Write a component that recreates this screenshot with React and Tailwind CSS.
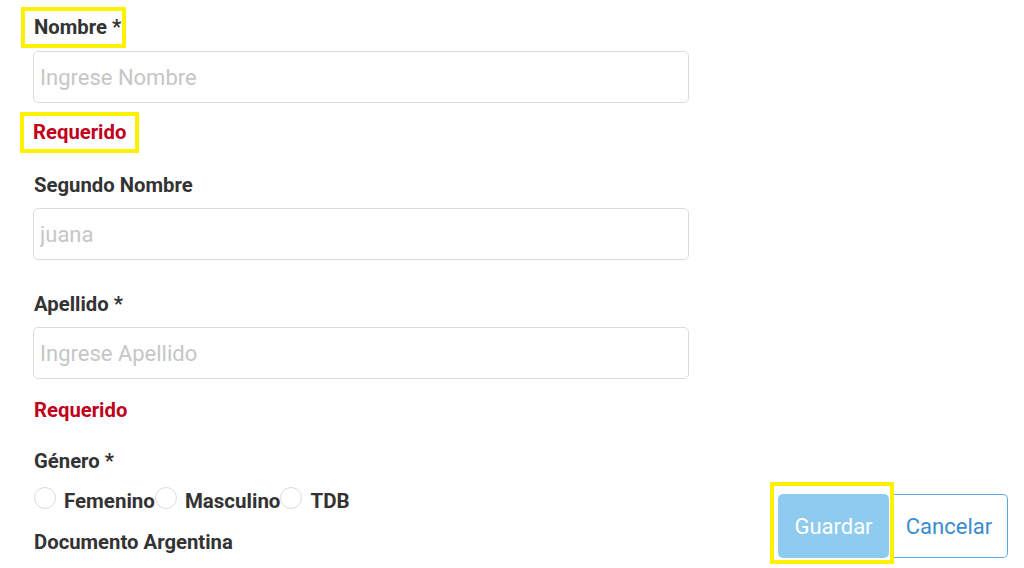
import React from 'react';

const font = { fontFamily: 'Roboto, "Liberation Sans", sans-serif' };

function TextInput({ placeholder, className = '' }) {
    return (
        <input
            type="text"
            placeholder={placeholder}
            className={`block w-[656px] h-[52px] px-[6px] border border-[#d9dde2] rounded-[5px] text-[22px] text-[#333] placeholder:text-[#c6c6c6] outline-none ${className}`}
        />
    );
}

function Radio({ label }) {
    return (
        <label className="flex items-center">
            <span className="w-[22px] h-[22px] rounded-full border border-[#dcdcdc] bg-white -mt-[6px]" />
            <span className="ml-[8px] text-[20.5px] font-bold text-[#333]">{label}</span>
        </label>
    );
}

export default function App() {
    return (
        <div style={font} className="relative h-[568px] w-[1024px] overflow-hidden bg-white">
            <div className="flex flex-col items-start pl-[34px]">
                <div className="mt-[7px] -ml-[13px] border-4 border-[#fff200] pl-[9px] pr-[1px] h-[41px] flex items-center">
                    <span className="text-[20.3px] font-bold text-[#333]">Nombre *</span>
                </div>
                <TextInput placeholder="Ingrese Nombre" className="mt-[3px] -ml-px" />
                <div className="mt-[9px] -ml-[14px] border-4 border-[#fff200] pl-[9px] pr-[9px] h-[41px] flex items-center">
                    <span className="text-[20.3px] font-bold text-[#c1001b]">Requerido</span>
                </div>

                <div className="mt-[19px] h-[27px] flex items-center text-[20.3px] font-bold text-[#333]">Segundo Nombre</div>
                <TextInput placeholder="juana" className="mt-[9px] -ml-px" />

                <div className="mt-[31px] h-[27px] flex items-center text-[20.3px] font-bold text-[#333]">Apellido *</div>
                <TextInput placeholder="Ingrese Apellido" className="mt-[9px] -ml-px" />

                <div className="mt-[18px] h-[27px] flex items-center text-[20.3px] font-bold text-[#c1001b]">Requerido</div>

                <div className="mt-[24px] h-[27px] flex items-center text-[20.3px] font-bold text-[#333]">Género *</div>
                <div className="mt-[12px] flex items-center h-[28px]">
                    <Radio label="Femenino" />
                    <Radio label="Masculino" />
                    <Radio label="TDB" />
                </div>
                <div className="mt-[14px] h-[27px] flex items-center text-[20.3px] font-bold text-[#333]">Documento Argentina</div>
            </div>

            <div className="absolute left-[770px] top-[482px] flex items-start">
                <div className="border-4 border-[#fff200] pt-[8px] pb-[2px] pl-[4px] pr-[1px]">
                    <button className="w-[111px] h-[64px] rounded-[5px] bg-[#8ecbef] text-white text-[22px]">Guardar</button>
                </div>
                <button className="mt-[12px] w-[114px] h-[64px] pr-[3px] rounded-r-[5px] border border-[#5aa9e3] border-l-0 text-[#3a8bd0] text-[22px] bg-white">Cancelar</button>
            </div>
        </div>
    );
}
